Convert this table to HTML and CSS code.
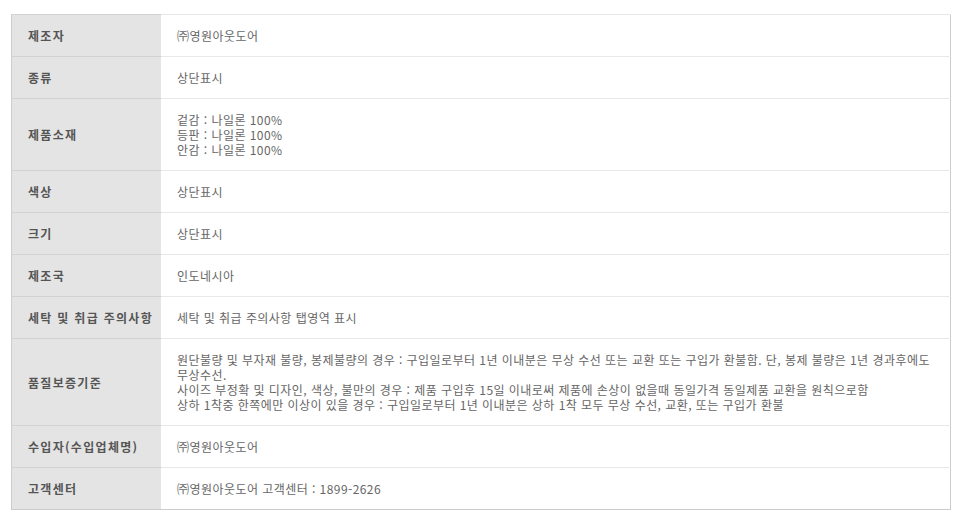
FILE: index.html
```html
<!DOCTYPE html>
<html lang="ko">
<head>
<meta charset="utf-8">
<title>상품정보</title>
<link rel="stylesheet" href="styles.css">
</head>
<body>
<div class="wrap">
<table class="info">
  <tr><th>제조자</th><td>㈜영원아웃도어</td></tr>
  <tr><th>종류</th><td>상단표시</td></tr>
  <tr><th>제품소재</th><td>겉감 : 나일론 100%<br>등판 : 나일론 100%<br>안감 : 나일론 100%</td></tr>
  <tr><th>색상</th><td>상단표시</td></tr>
  <tr><th>크기</th><td>상단표시</td></tr>
  <tr><th>제조국</th><td>인도네시아</td></tr>
  <tr><th>세탁 및 취급 주의사항</th><td>세탁 및 취급 주의사항 탭영역 표시</td></tr>
  <tr><th>품질보증기준</th><td>원단불량 및 부자재 불량, 봉제불량의 경우 : 구입일로부터 1년 이내분은 무상 수선 또는 교환 또는 구입가 환불함. 단, 봉제 불량은 1년 경과후에도 무상수선.<br>사이즈 부정확 및 디자인, 색상, 불만의 경우 : 제품 구입후 15일 이내로써 제품에 손상이 없을때 동일가격 동일제품 교환을 원칙으로함<br>상하 1착중 한쪽에만 이상이 있을 경우 : 구입일로부터 1년 이내분은 상하 1착 모두 무상 수선, 교환, 또는 구입가 환불</td></tr>
  <tr><th>수입자(수입업체명)</th><td>㈜영원아웃도어</td></tr>
  <tr><th>고객센터</th><td>㈜영원아웃도어 고객센터 : 1899-2626</td></tr>
</table>
</div>
</body>
</html>
```
FILE: styles.css
```css
html, body {
  margin: 0;
  padding: 0;
  background: #fff;
}
.wrap {
  padding: 14px 0 0 11px;
}
.info {
  width: 940px;
  border-collapse: collapse;
  border: 1px solid #cccccc;
  font-family: "Noto Sans CJK KR", "Liberation Sans", sans-serif;
  font-size: 12px;
  line-height: 15px;
}
.info th,
.info td {
  padding: 13px 10px 13px 16px;
  vertical-align: middle;
  text-align: left;
}
.info th {
  width: 133px;
  background: #e4e4e4;
  color: #555555;
  font-weight: bold;
  letter-spacing: 1.3px;
  border-top: 1px solid #d2d2d2;
  white-space: nowrap;
  padding-left: 16px;
  padding-right: 0;
}
.info td {
  color: #666666;
  font-weight: normal;
  letter-spacing: 0.45px;
  border-top: 1px solid #e8e8e8;
}
```
